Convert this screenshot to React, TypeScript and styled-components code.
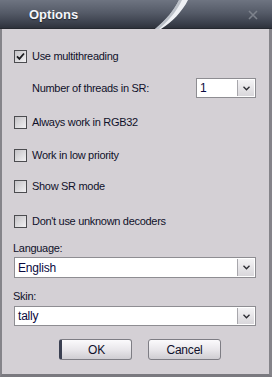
import React from 'react';
import styled, { createGlobalStyle } from 'styled-components';

const GlobalStyle = createGlobalStyle`
  html, body {
    margin: 0;
    padding: 0;
    background: #d4d0d5;
  }
`;

const Window = styled.div`
  width: 272px;
  height: 377px;
  box-sizing: border-box;
  display: flex;
  flex-direction: column;
  background: #d4d0d5;
  font-family: 'Liberation Sans', Arial, sans-serif;
  font-size: 11px;
  letter-spacing: -0.3px;
  color: #10102a;
  overflow: hidden;
`;

const TitleBar = styled.div`
  position: relative;
  height: 29px;
  flex: none;
  display: flex;
  align-items: center;
  background: linear-gradient(#6e7481 0%, #555b68 45%, #3d424e 80%, #2e323c 100%);
  border-bottom: 1px solid #25282f;
  box-sizing: border-box;
`;

const Title = styled.span`
  margin-left: 29px;
  margin-top: 1px;
  font-size: 13px;
  font-weight: bold;
  letter-spacing: 0;
  color: #f4f6fb;
  text-shadow: 0 1px 1px rgba(0, 0, 0, 0.5);
`;

const Swoosh = styled.svg`
  position: absolute;
  left: 152px;
  top: 0;
`;

const Close = styled.svg`
  position: absolute;
  right: 14px;
  top: 10px;
`;

const Body = styled.div`
  flex: 1;
  display: flex;
  flex-direction: column;
  padding: 21px 13px 0 11px;
  border-left: 2px solid #85848a;
  border-right: 3px solid #85848a;
  border-bottom: 3px solid #7a797f;
  box-sizing: border-box;
`;

const Row = styled.div<{ $top: number; $indent?: number }>`
  display: flex;
  align-items: center;
  margin-top: ${p => p.$top}px;
  padding-left: ${p => p.$indent ?? 0}px;
`;

const Box = styled.span`
  width: 11px;
  height: 11px;
  flex: none;
  margin-left: 1px;
  border: 1px solid #4c4c50;
  background: linear-gradient(135deg, #c4c2c6, #f2f1f3);
  display: flex;
  align-items: center;
  justify-content: center;
`;

const CheckLabel = styled.span`
  margin-left: 5px;
  line-height: 13px;
`;

const Label = styled.div<{ $top: number }>`
  margin-top: ${p => p.$top}px;
  line-height: 13px;
`;

const Spacer = styled.div`
  flex: 1;
`;

const Select = styled.div<{ $width?: number; $height: number; $top?: number }>`
  display: flex;
  align-items: stretch;
  width: ${p => (p.$width ? `${p.$width}px` : 'auto')};
  height: ${p => p.$height}px;
  margin-top: ${p => p.$top ?? 0}px;
  margin-left: 1px;
  box-sizing: border-box;
  border: 1px solid #8e8d92;
  background: #ffffff;
`;

const SelectValue = styled.span`
  flex: 1;
  display: flex;
  align-items: center;
  padding-left: 3px;
  font-size: 12px;
  letter-spacing: -0.2px;
  color: #0a0a40;
`;

const SelectButton = styled.span`
  width: 16px;
  margin: 1px;
  border-left: 1px solid #a8a7ac;
  background: linear-gradient(#f4f3f5, #d9d7db);
  display: flex;
  align-items: center;
  justify-content: center;
`;

const ButtonBar = styled.div`
  display: flex;
  gap: 16px;
  margin-top: 13px;
  padding-left: 46px;
`;

const Button = styled.div<{ $focused?: boolean }>`
  width: 73px;
  height: 21px;
  box-sizing: border-box;
  border: 1px solid #7e7d84;
  border-left: ${p => (p.$focused ? '3px solid #3b4052' : '1px solid #7e7d84')};
  border-radius: 3px;
  background: linear-gradient(#fbfafc 0%, #e9e7eb 50%, #cfcdd2 100%);
  display: flex;
  align-items: center;
  justify-content: center;
  font-size: 12px;
  letter-spacing: -0.2px;
  color: #10102a;
`;

function Chevron() {
  return (
    <svg width="7" height="5" viewBox="0 0 7 5">
      <path d="M0.5 0.8 L3.5 3.8 L6.5 0.8" fill="none" stroke="#2a2a30" strokeWidth="1.3" />
    </svg>
  );
}

function Check({ label, checked, top }: { label: string; checked?: boolean; top: number }) {
  return (
    <Row $top={top}>
      <Box>
        {checked ? (
          <svg width="9" height="9" viewBox="0 0 9 9">
            <path d="M1 4.3 L3.4 6.8 L8 1.5" fill="none" stroke="#1b1b1f" strokeWidth="1.8" />
          </svg>
        ) : null}
      </Box>
      <CheckLabel>{label}</CheckLabel>
    </Row>
  );
}

export default function App() {
  return (
    <Window>
      <GlobalStyle />
      <TitleBar>
        <Title>Options</Title>
        <Swoosh width="40" height="29" viewBox="0 0 40 29">
          <path d="M3 29 C14 20 22 10 27 0 L36 0 C30 12 20 22 9 29 Z" fill="#eef0f4" />
          <path d="M3 29 C14 20 22 10 27 0 L30 0 C25 11 16 21 7 29 Z" fill="#9aa0aa" opacity="0.6" />
        </Swoosh>
        <Close width="10" height="10" viewBox="0 0 10 10">
          <path d="M1 1 L9 9 M9 1 L1 9" stroke="#7d828c" strokeWidth="1.6" />
        </Close>
      </TitleBar>
      <Body>
        <Check label="Use multithreading" checked top={0} />
        <Row $top={15} $indent={19}>
          <span>Number of threads in SR:</span>
          <Spacer />
          <Select $width={60} $height={20}>
            <SelectValue>1</SelectValue>
            <SelectButton>
              <Chevron />
            </SelectButton>
          </Select>
        </Row>
        <Check label="Always work in RGB32" top={18} />
        <Check label="Work in low priority" top={20} />
        <Check label="Show SR mode" top={18} />
        <Check label="Don't use unknown decoders" top={22} />
        <Label $top={14}>Language:</Label>
        <Select $height={21} $top={2}>
          <SelectValue>English</SelectValue>
          <SelectButton>
            <Chevron />
          </SelectButton>
        </Select>
        <Label $top={12}>Skin:</Label>
        <Select $height={20} $top={3}>
          <SelectValue>tally</SelectValue>
          <SelectButton>
            <Chevron />
          </SelectButton>
        </Select>
        <ButtonBar>
          <Button $focused>OK</Button>
          <Button>Cancel</Button>
        </ButtonBar>
      </Body>
    </Window>
  );
}
